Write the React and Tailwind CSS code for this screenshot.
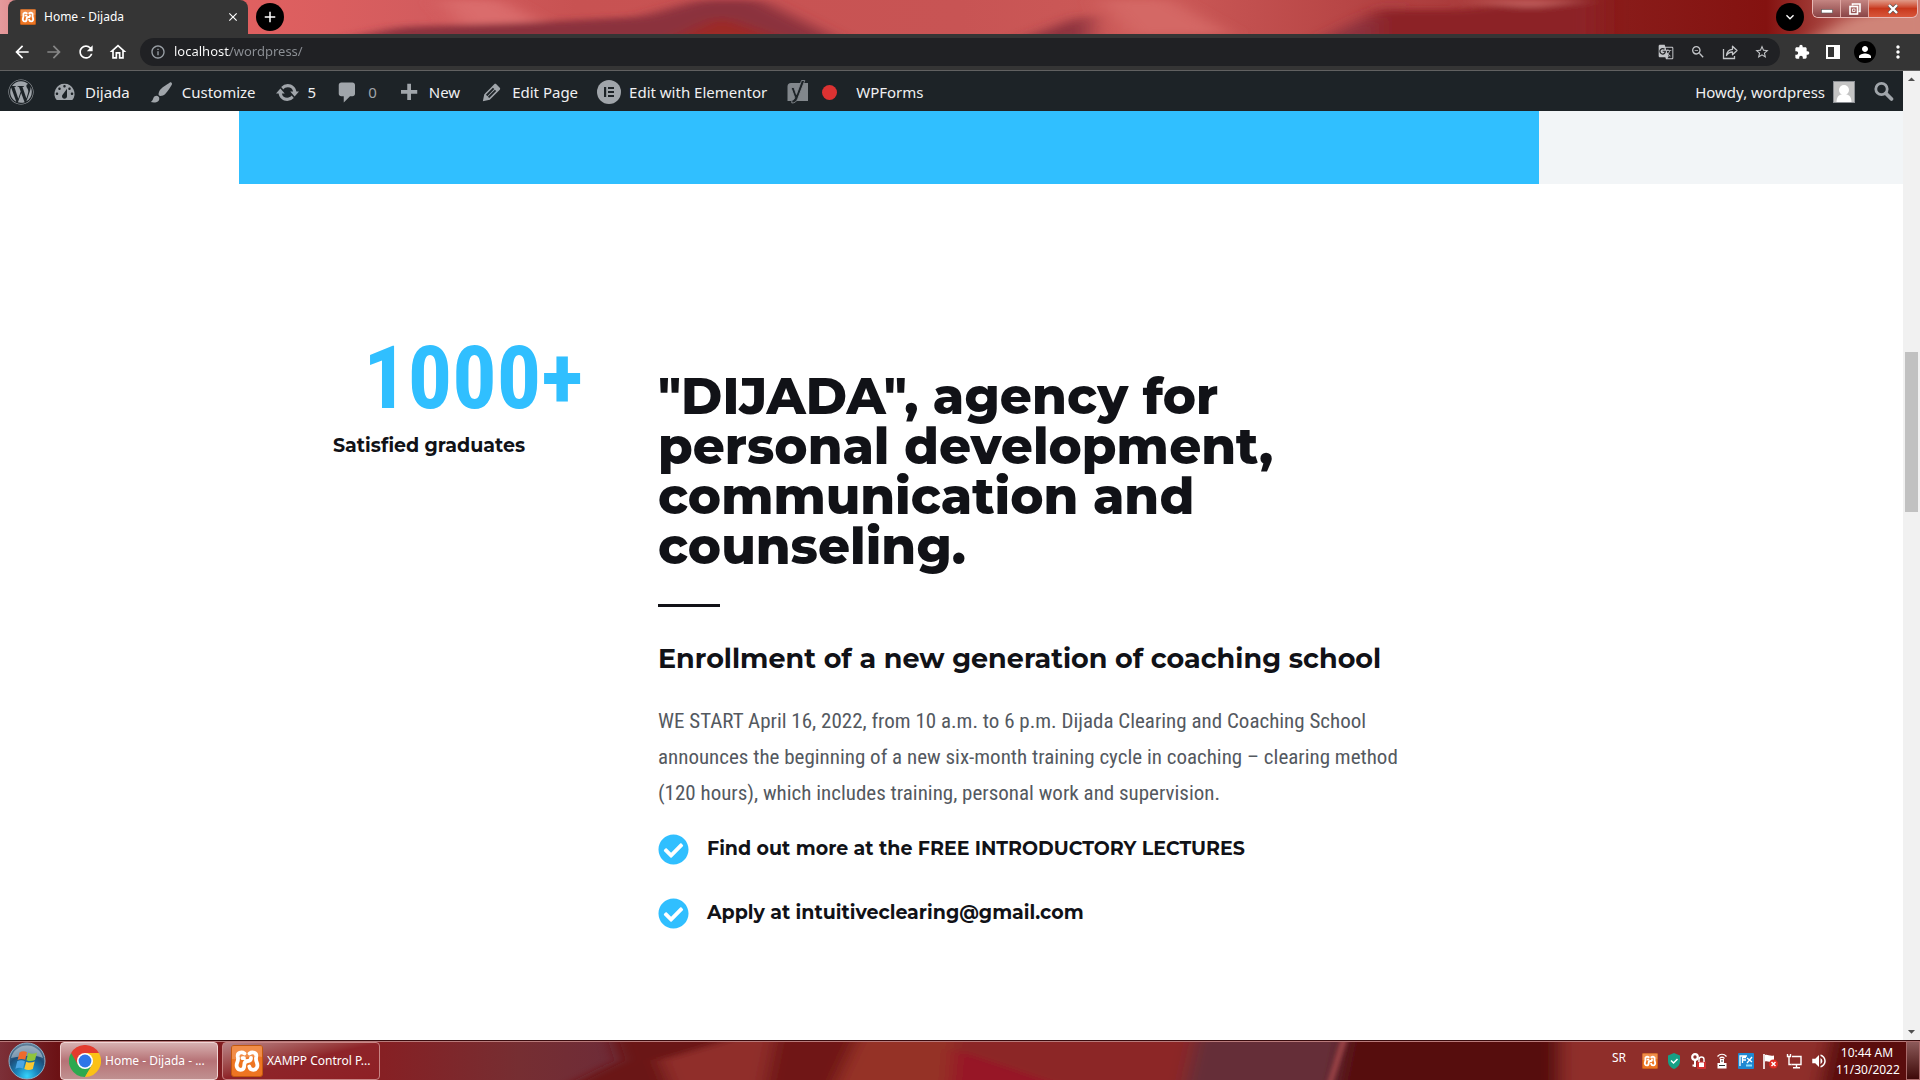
import React from "react";
import {
  MdAdd, MdArrowBack, MdArrowForward, MdClose, MdExtension, MdGTranslate, MdInfoOutline,
  MdKeyboardArrowDown, MdMoreVert, MdOutlineHome, MdPerson, MdRefresh, MdStarBorder, MdZoomOut,
  MdVolumeUp, MdArrowDropUp, MdArrowDropDown,
} from "react-icons/md";
import { FaWordpress, FaCheckCircle } from "react-icons/fa";

const dash = {
  dashboard: "M3.76 16h12.48A7.998 7.998 0 0 0 10 3a7.998 7.998 0 0 0-6.24 13zM10 4c.55 0 1 .45 1 1s-.45 1-1 1-1-.45-1-1 .45-1 1-1zM6 6c.55 0 1 .45 1 1s-.45 1-1 1-1-.45-1-1 .45-1 1-1zm8 0c.55 0 1 .45 1 1s-.45 1-1 1-1-.45-1-1 .45-1 1-1zm-5.37 5.55L12 7v6c0 1.1-.9 2-2 2s-2-.9-2-2c0-.57.24-1.08.63-1.45zM4 10c.55 0 1 .45 1 1s-.45 1-1 1-1-.45-1-1 .45-1 1-1zm12 0c.55 0 1 .45 1 1s-.45 1-1 1-1-.45-1-1 .45-1 1-1z",
  brush: "M18.33 3.57s.27-.8-.31-1.36c-.53-.52-1.22-.24-1.22-.24-.61.3-5.76 3.47-7.67 5.57-.86.96-2.06 3.79-1.09 4.82.92.98 3.96-.17 4.79-1 2.06-2.06 5.21-7.17 5.5-7.79zM1.4 17.65c2.37-1.56 1.46-3.41 3.23-4.64.93-.65 2.22-.62 3.08.29.63.67.8 2.57-.16 3.46-1.57 1.45-4 1.55-6.15.89z",
  update: "M10.2 3.28c3.53 0 6.43 2.61 6.92 6h2.08l-3.5 4-3.5-4h2.32a4.439 4.439 0 0 0-4.32-3.45c-1.45 0-2.73.71-3.54 1.78L4.95 5.66a6.965 6.965 0 0 1 5.25-2.38zm-.4 13.44c-3.52 0-6.43-2.61-6.92-6H.8l3.5-4c1.17 1.33 2.33 2.67 3.5 4H5.48a4.439 4.439 0 0 0 4.32 3.45c1.45 0 2.73-.71 3.54-1.78l1.71 1.95a6.95 6.95 0 0 1-5.25 2.38z",
  comment: "M5 2h9c1.1 0 2 .9 2 2v7c0 1.1-.9 2-2 2h-2l-5 5v-5H5c-1.1 0-2-.9-2-2V4c0-1.1.9-2 2-2z",
  plus: "M17 8v3h-5v5H9v-5H4V8h5V3h3v5h5z",
  edit: "M13.89 3.39l2.71 2.72c.46.46.42 1.24.03 1.64l-8.01 8.02-5.56 1.16 1.16-5.58s7.6-7.63 7.99-8.03c.39-.39 1.22-.39 1.68.07zm-2.73 2.79l-5.59 5.61 1.11 1.11 5.54-5.65zm-2.97 8.23l5.58-5.6-1.07-1.08-5.59 5.6z",
};

function Dashicon({ name }) {
  return (
    <svg viewBox="0 0 20 20" className="h-[25px] w-[25px] shrink-0 fill-[#a0a5aa]" aria-hidden="true">
      <path d={dash[name]} fillRule="evenodd" />
    </svg>
  );
}

function ElementorIcon() {
  return (
    <svg viewBox="0 0 24 24" className="h-6 w-6 shrink-0" aria-hidden="true">
      <circle cx="12" cy="12" r="12" fill="#a0a5aa" />
      <path d="M7 7h2.200v10H7zM11 7h6v2h-6zM11 11h6v2h-6zM11 15h6v2h-6z" fill="#1d2327" />
    </svg>
  );
}

function YoastIcon() {
  return (
    <svg viewBox="0 0 24 26" className="h-[26px] w-6" aria-hidden="true">
      <path d="M5 4H22V22H1.500V7.500A3.500 3.500 0 0 1 5 4z" fill="#82878c" />
      <path d="M15.500 1.500H18.800L11.800 19.500C10.600 22.700 8.800 24 5.800 24V21.300C7.700 21 8.600 20 8.700 18.500L5 8.500H8L10.400 15.500z" fill="#1d2327" stroke="#82878c" strokeWidth="0.900" />
    </svg>
  );
}

function XamppLogo({ className }) {
  return (
    <svg viewBox="0 0 32 32" className={className} aria-hidden="true">
      <rect x="0.5" y="0.5" width="31" height="31" rx="2.5" fill="#ee7522" stroke="#c2590f" />
      <path d="M1 1h30v11C20 10 10 15 1 14z" fill="#fff" opacity="0.18" />
      <path
        d="M13.500 8.500C10.500 6.300 6 7.800 6.800 11.800C7.300 14 7.300 15 6.200 17.500C4.600 21.500 6.500 24.800 9.800 24.800C13 24.800 13.300 22.300 13.300 19.800C13.300 17 14.500 16 17 16C19 16 20 14.800 20 12.800M18.500 8.500C21.500 6.300 26 7.800 25.200 11.800C24.700 14 24.700 15 25.800 17.500C27.400 21.500 25.500 24.800 22.200 24.800C20 24.800 18.700 23.600 18.300 21.500M11.500 13.200H13"
        fill="none" stroke="#fff" strokeWidth="3.8" strokeLinecap="round" strokeLinejoin="round"
      />
    </svg>
  );
}

function ChromeLogo() {
  return (
    <svg viewBox="0 0 48 48" className="h-8 w-8 shrink-0" aria-hidden="true">
      <path d="M24 24V48A24 24 0 0 1 3.2 12z" fill="#2da94f" />
      <path d="M3.2 12A24 24 0 0 1 44.8 12H24L13.6 18V30z" fill="#e33b2e" />
      <path d="M34.4 30 24 48 13.6 30z" fill="#2da94f" />
      <path d="M34.4 30 24 48A24 24 0 0 0 44.8 12H24z" fill="#fbc116" />
      <circle cx="24" cy="24" r="12" fill="#fff" />
      <circle cx="24" cy="24" r="9.6" fill="#2f76e8" />
    </svg>
  );
}

function StartOrb() {
  return (
    <svg viewBox="0 0 38 38" className="h-[38px] w-[38px]" aria-hidden="true">
      <defs>
        <radialGradient id="orb" cx="50%" cy="92%" r="85%">
          <stop offset="0" stopColor="#35d4fb" />
          <stop offset="0.35" stopColor="#1b86bd" />
          <stop offset="0.7" stopColor="#1d4d78" />
          <stop offset="1" stopColor="#5b7c98" />
        </radialGradient>
      </defs>
      <circle cx="19" cy="19" r="18" fill="url(#orb)" stroke="#8cb2c9" strokeWidth="1" />
      <path d="M3 16A16.5 16.5 0 0 1 35 16C27 12 12 14 3 16z" fill="#fff" opacity="0.4" />
      <path d="M11.5 10.5C14 8.700 17 9 19 10.300L17.200 17.800C14.500 16.500 12 16.600 9.600 18z" fill="#ee6a2c" />
      <path d="M20.200 10.800C23 12.200 26 12 29 10.500L27 18C24.500 19.400 21.500 19.500 18.500 18.200z" fill="#90c43c" />
      <path d="M9.200 19.300C11.800 18 14.300 18 16.900 19.200L15 26.500C12.500 25.300 9.800 25.400 7.400 26.800z" fill="#4aa5e4" />
      <path d="M18.200 19.700C21 21 24 20.800 26.700 19.500L24.800 27C22 28.400 19 28.300 16.300 27z" fill="#fbc831" />
    </svg>
  );
}

function TitleWallpaper() {
  return (
    <svg viewBox="0 0 1920 34" preserveAspectRatio="none" className="absolute inset-0 h-full w-full" aria-hidden="true">
      <defs>
        <linearGradient id="top">
          <stop offset="0" stopColor="#e59a9c" />
          <stop offset="0.01" stopColor="#e08a8c" />
          <stop offset="0.13" stopColor="#e06060" />
          <stop offset="0.22" stopColor="#d35c5e" />
          <stop offset="0.3" stopColor="#c85252" />
          <stop offset="0.5" stopColor="#c85454" />
          <stop offset="0.6" stopColor="#cc5a58" />
          <stop offset="0.7" stopColor="#b84646" />
          <stop offset="0.8" stopColor="#a03434" />
          <stop offset="0.83" stopColor="#8a1d1b" />
          <stop offset="0.92" stopColor="#841210" />
          <stop offset="0.96" stopColor="#b0504a" />
          <stop offset="1" stopColor="#cc7a72" />
        </linearGradient>
        <filter id="soft" x="-20%" y="-50%" width="140%" height="200%"><feGaussianBlur stdDeviation="12 3" /></filter>
      </defs>
      <rect width="1920" height="34" fill="url(#top)" />
      <g filter="url(#soft)">
        <path d="M440 0H500L560 34H470z" fill="#da6c6c" />
        <path d="M340 40 400 27 520 23 640 17 700 0H760L840 40z" fill="#8b303c" />
        <path d="M670 40 720 16 785 40z" fill="#9c2b26" />
        <path d="M1020 40 1090 13V40z" fill="#8b303c" />
        <path d="M1100 0H1170L1230 34H1130z" fill="#d46765" />
        <path d="M1320 40 1400 0 1375 20 1375 40z" fill="#8b303c" />
        <path d="M1375 10 1460 10 1520 4 1600-5V40H1375z" fill="#8c2226" />
        <path d="M1460 0H1590L1530 8z" fill="#c4605e" />
        <path d="M1810 40 1850 18 1940 10V40z" fill="#cf8478" />
      </g>
    </svg>
  );
}

function TaskWallpaper() {
  return (
    <svg viewBox="0 0 1920 40" preserveAspectRatio="none" className="absolute inset-0 h-full w-full" aria-hidden="true">
      <defs>
        <linearGradient id="bar">
          <stop offset="0" stopColor="#7c3038" />
          <stop offset="0.03" stopColor="#6c1215" />
          <stop offset="0.1" stopColor="#801c20" />
          <stop offset="0.2" stopColor="#862024" />
          <stop offset="0.27" stopColor="#762e32" />
          <stop offset="0.32" stopColor="#6e2c38" />
        </linearGradient>
        <filter id="softbar" x="-5%" y="-50%" width="110%" height="200%"><feGaussianBlur stdDeviation="9 2" /></filter>
        <filter id="edge" x="-100%" width="300%"><feGaussianBlur stdDeviation="2 0" /></filter>
      </defs>
      <rect width="1920" height="40" fill="url(#bar)" />
      <g filter="url(#softbar)">
        <path d="M612-5H780V45H570L620 20z" fill="#6b1212" />
        <path d="M660 20 700 8 740-5H780V45H670z" fill="#902e2c" />
        <path d="M775-5H860L840 45H765z" fill="#6f1815" />
        <path d="M858-5H955V45H835z" fill="#953028" />
        <path d="M955-5H1196L1185 45H950z" fill="#8c2826" />
        <path d="M953 8 1060 45H950z" fill="#971225" />
        <path d="M1196-5H1345L1335 45H1185z" fill="#652f39" />
        <path d="M1345-5H1560V45H1335z" fill="#570808" />
        <path d="M1560-5H1830V45H1560z" fill="#8f2e29" />
        <path d="M1830-5H1940V45H1820z" fill="#5a0809" />
      </g>
      <path d="M1340 0H1347L1334 40H1328z" fill="#a64a4c" opacity="0.8" filter="url(#edge)" />
    </svg>
  );
}

function AdminItem({ icon, children, dim }) {
  return (
    <a href="#" className={dim ? "flex items-center gap-2 text-[#a0a5aa]" : "flex items-center gap-2 text-[#f0f0f1]"}>
      {icon}
      <span>{children}</span>
    </a>
  );
}

const UI = "font-['Segoe_UI','Noto_Sans',sans-serif]";
const HEAD = "font-['Montserrat','Inter',sans-serif]";
const BODY = "font-['Roboto_Condensed','Roboto',sans-serif]";

export default function App() {
  return (
    <div className={`flex h-screen flex-col overflow-hidden bg-white ${UI}`}>
      <header className="shrink-0">
        <div className="relative flex h-[34px] items-end overflow-hidden bg-[#c85454]">
          <TitleWallpaper />
          <div className="relative ml-2 flex h-full w-60 items-center rounded-t-lg bg-[#353535] pl-3 pr-2 text-white">
            <XamppLogo className="h-4 w-4" />
            <span className="ml-2 flex-1 text-xs">Home - Dijada</span>
            <button aria-label="Close tab"><MdClose className="h-3.5 w-3.5" /></button>
          </div>
          <button aria-label="New tab" className="relative mb-[3px] ml-2 grid h-7 w-7 place-items-center rounded-full bg-black text-white"><MdAdd className="h-[18px] w-[18px]" /></button>
          <div className="flex-1" />
          <button aria-label="Search tabs" className="relative mb-[3px] mr-2 grid h-7 w-7 place-items-center rounded-full bg-black text-white"><MdKeyboardArrowDown className="h-4 w-4" /></button>
          <div className="relative mr-0.5 flex h-[18px] self-start overflow-hidden rounded-b-md border border-t-0 border-[#e9b9b6] text-white">
            <button aria-label="Minimize" className="grid w-7 place-items-center border-r border-[#e0a8a4] bg-linear-to-b from-[#c48582] to-[#8a4446]">
              <svg viewBox="0 0 12 12" className="h-3 w-3"><rect x="0.5" y="6.500" width="11" height="3.500" fill="#fff" stroke="#555" strokeWidth="0.6" /></svg>
            </button>
            <button aria-label="Restore" className="grid w-7 place-items-center border-r border-[#e0a8a4] bg-linear-to-b from-[#c48582] to-[#8a4446]">
              <svg viewBox="0 0 12 12" className="h-3 w-3" fill="none" stroke="#fff" strokeWidth="1.6"><path d="M3.500 2.500V1H11V8.500H9.500" /><rect x="1" y="3.500" width="7.500" height="7.500" /><path d="M3.500 6H6v2.500H3.500z" strokeWidth="0.8" /></svg>
            </button>
            <button aria-label="Close" className="grid w-12 place-items-center bg-linear-to-b from-[#e09a88] via-[#c8381c] to-[#d8563a]">
              <svg viewBox="0 0 12 12" className="h-3 w-3"><path d="M2 2l8 8M10 2l-8 8" stroke="#555" strokeWidth="3.6" /><path d="M2 2l8 8M10 2l-8 8" stroke="#fff" strokeWidth="2.400" /></svg>
            </button>
          </div>
        </div>

        <div className="flex h-[37px] items-center border-b border-[#616161] bg-[#353535] pl-3 text-white">
          <button aria-label="Back" className="w-8"><MdArrowBack className="h-5 w-5" /></button>
          <button aria-label="Forward" className="w-8 text-[#878787]"><MdArrowForward className="h-5 w-5" /></button>
          <button aria-label="Reload" className="w-8"><MdRefresh className="h-5 w-5" /></button>
          <button aria-label="Home" className="w-8"><MdOutlineHome className="h-5 w-5" /></button>
          <div className="flex h-7 flex-1 items-center rounded-full bg-[#202124] px-2.5 text-[#9aa0a6]">
            <MdInfoOutline className="h-4 w-4" />
            <input
              aria-label="Address"
              defaultValue="localhost/wordpress/"
              className="ml-2 flex-1 bg-[linear-gradient(90deg,#fff_56px,#8d9196_56px)] bg-clip-text text-[13px] text-transparent outline-none"
            />
            <div className="flex items-center gap-4 text-[#c3c5c8]">
              <button aria-label="Translate"><MdGTranslate className="h-4 w-4" /></button>
              <button aria-label="Zoom"><MdZoomOut className="h-4 w-4" /></button>
              <button aria-label="Share">
                <svg viewBox="0 0 16 16" className="h-4 w-4" fill="none" stroke="currentColor" strokeWidth="1.300"><path d="M1.500 5v9.500h11V12" /><path d="M4.500 11.500C5 7.500 7 5.500 10.500 5.300V2.200L15 6.500l-4.500 4.200V8C8 8 6 9 4.500 11.500z" strokeLinejoin="round" /></svg>
              </button>
              <button aria-label="Bookmark"><MdStarBorder className="h-4 w-4" /></button>
            </div>
          </div>
          <button aria-label="Extensions" className="ml-3.5"><MdExtension className="h-4 w-4" /></button>
          <button aria-label="Side panel" className="ml-4">
            <svg viewBox="0 0 14 14" className="h-3.5 w-3.5"><path d="M0 0h14v14H0zM2 2v10h6V2z" fill="#fff" fillRule="evenodd" /></svg>
          </button>
          <button aria-label="Profile" className="ml-3.5 grid h-[22px] w-[22px] place-items-center rounded-full bg-black"><MdPerson className="h-[18px] w-[18px]" /></button>
          <button aria-label="Menu" className="mx-3"><MdMoreVert className="h-5 w-5" /></button>
        </div>
      </header>

      <div className="flex min-h-0 flex-1">
        <div className="flex min-w-0 flex-1 flex-col">
          <nav className="flex h-10 shrink-0 items-center justify-between bg-[#1d2327] px-2 pt-0.5 text-[15px] text-[#f0f0f1]">
            <div className="flex items-center">
              <a href="#" aria-label="About WordPress" className="mr-[18px]"><FaWordpress className="h-[26px] w-[26px] text-[#a0a5aa]" /></a>
              <div className="flex items-center gap-[19px]">
                <AdminItem icon={<Dashicon name="dashboard" />}>Dijada</AdminItem>
                <AdminItem icon={<Dashicon name="brush" />}>Customize</AdminItem>
                <AdminItem icon={<Dashicon name="update" />}>5</AdminItem>
                <AdminItem icon={<Dashicon name="comment" />} dim>0</AdminItem>
                <AdminItem icon={<Dashicon name="plus" />}>New</AdminItem>
                <AdminItem icon={<Dashicon name="edit" />}>Edit Page</AdminItem>
                <AdminItem icon={<ElementorIcon />}>Edit with Elementor</AdminItem>
                <a href="#" aria-label="Yoast SEO" className="flex items-center gap-3"><YoastIcon /><span className="h-[15px] w-[15px] rounded-full bg-[#dc3232]" /></a>
                <a href="#">WPForms</a>
              </div>
            </div>
            <div className="flex items-center">
              <a href="#" className="flex items-center gap-2">
                Howdy, wordpress
                <svg viewBox="0 0 22 22" className="h-[22px] w-[22px]" aria-hidden="true"><rect x="0.500" y="0.500" width="21" height="21" fill="#c4c4c4" stroke="#8c8f94" /><circle cx="11" cy="9" r="5" fill="#fff" /><path d="M3.500 21C3.500 15 7 13 11 13s7.500 2 7.500 8z" fill="#fff" /></svg>
              </a>
              <button aria-label="Search" className="ml-[18px]">
                <svg viewBox="0 0 22 22" className="h-[22px] w-[22px]" fill="none" stroke="#a0a5aa" strokeLinecap="round"><circle cx="8.500" cy="8" r="5.700" strokeWidth="2.800" /><path d="M13 12.500l5.500 5.500" strokeWidth="3.800" /></svg>
              </button>
            </div>
          </nav>

          <main className="flex-1">
            <div className="grid h-[73px] grid-cols-[239fr_1300fr_364fr]">
              <div />
              <div className="bg-[#30bfff]" />
              <div className="bg-[#f2f5f7]" />
            </div>

            <section className="mx-auto flex max-w-[1425px] px-[94px] pt-[142px] text-[#111217]">
              <div className="w-[325px] shrink-0">
                <div className={`w-[250px] text-right text-[88px] font-bold leading-[104px] text-[#30bfff] ${BODY}`}>1000+</div>
                <p className={`mt-1 text-[19px] font-bold leading-6 ${HEAD}`}>Satisfied graduates</p>
              </div>
              <div className="mt-[46px] min-w-0 flex-1">
                <h1 className={`text-[50px] font-extrabold leading-[50px] ${HEAD}`}>
                  "DIJADA", agency for<br />personal development,<br />communication and<br />counseling.
                </h1>
                <hr className="mt-8 w-[62px] border-t-[3px] border-[#111217]" />
                <h2 className={`mt-8 text-[27px] font-bold leading-10 ${HEAD}`}>Enrollment of a new generation of coaching school</h2>
                <p className={`mt-6 text-[21px] leading-9 text-[#54595f] ${BODY}`}>
                  WE START April 16, 2022, from 10 a.m. to 6 p.m. Dijada Clearing and Coaching School<br />
                  announces the beginning of a new six-month training cycle in coaching – clearing method<br />
                  (120 hours), which includes training, personal work and supervision.
                </p>
                <ul className={`mt-5 flex flex-col gap-7 text-[19px] font-bold ${HEAD}`}>
                  {["Find out more at the FREE INTRODUCTORY LECTURES", "Apply at intuitiveclearing@gmail.com"].map((t) => (
                    <li key={t} className="flex h-9 items-center gap-[18px]">
                      <FaCheckCircle className="h-[31px] w-[31px] text-[#30bfff]" />
                      {t}
                    </li>
                  ))}
                </ul>
              </div>
            </section>
          </main>
        </div>

        <div className="flex w-[17px] shrink-0 flex-col items-center bg-[#f1f1f1] text-[#505050]" aria-hidden="true">
          <MdArrowDropUp className="h-[17px] w-[17px]" />
          <div className="grow-[264]" />
          <div className="w-[13px] grow-[160] bg-[#c1c1c1]" />
          <div className="grow-[511]" />
          <MdArrowDropDown className="h-[17px] w-[17px]" />
        </div>
      </div>

      <footer className="relative flex h-10 shrink-0 items-center overflow-hidden border-t border-[#3a0c0e] bg-[#6b1212] text-white">
        <TaskWallpaper />
        <div className="absolute inset-x-0 top-0 h-px bg-[#b87a7a]" />
        <button aria-label="Start" className="relative ml-2"><StartOrb /></button>
        <button className="relative ml-3.5 flex h-[38px] w-[158px] items-center gap-1 rounded-sm border border-[#f0d4d4] bg-linear-to-b from-[#d6b0b0] via-[#b67276] to-[#c09090] pl-2 text-xs">
          <ChromeLogo />Home - Dijada - ...
        </button>
        <button className="relative ml-1 flex h-[38px] w-[158px] items-center gap-1 rounded-sm border border-[#c88484] bg-linear-to-br from-[#b88488] via-[#8e2429] to-[#8e2025] pl-2 text-xs">
          <XamppLogo className="h-8 w-8 shrink-0" />XAMPP Control P...
        </button>
        <div className="relative ml-auto flex h-full items-center gap-2">
          <span className="mb-1.5 mr-2 text-xs">SR</span>
          <XamppLogo className="h-4 w-4" />
          <svg viewBox="0 0 16 16" className="h-4 w-4" aria-hidden="true"><path d="M8 0l6 2.500V8c0 4-2.500 6.500-6 8-3.500-1.500-6-4-6-8V2.500z" fill="#16a085" /><path d="M5 7.500l2.500 2.500L11.500 6" fill="none" stroke="#fff" strokeWidth="1.500" /></svg>
          <svg viewBox="0 0 16 16" className="h-4 w-4" aria-hidden="true"><circle cx="5" cy="4" r="2.800" fill="none" stroke="#fff" strokeWidth="2.200" /><path d="M5 7v7M5 12.500H2.500" stroke="#fff" strokeWidth="2" /><rect x="7" y="8.500" width="9" height="7.500" rx="1" fill="#d32f2f" /><path d="M9 9V6.500a2.500 2.500 0 0 1 5 0V9" stroke="#fff" fill="none" strokeWidth="1.400" /><rect x="9" y="9.500" width="5" height="4.500" fill="#fff" /></svg>
          <svg viewBox="0 0 16 16" className="h-4 w-4" fill="none" stroke="#fff" aria-hidden="true"><path d="M3.500 3.500C6 .5 10 .5 12.500 3.500M5.500 5.500C7 4 9 4 10.500 5.500" strokeWidth="1.200" /><path d="M6 6h4v4h2.500v5.500h-9V10H6z" fill="#fff" stroke="none" /><path d="M5 12.500h6M8 7v2" stroke="#333" /></svg>
          <svg viewBox="0 0 16 16" className="h-4 w-4" aria-hidden="true"><rect width="16" height="16" rx="1" fill="#1e88d2" /><path d="M2 13V3h7M4.500 4v6M4.500 4.500H8M4.500 7H8M9 5l5 4M14 4L9 10" stroke="#fff" strokeWidth="1.300" fill="none" /><path d="M8 12.500h6" stroke="#8be0ff" strokeWidth="2" /></svg>
          <svg viewBox="0 0 16 16" className="h-4 w-4" aria-hidden="true"><path d="M2 1v15" stroke="#fff" strokeWidth="1.600" /><path d="M3 2c3-1 4 1.500 9 .5V9C8 10 6 7.500 3 8.500z" fill="#fff" /><circle cx="11.500" cy="11" r="4.500" fill="#e02a22" /><path d="M9.500 9l4 4M13.500 9l-4 4" stroke="#fff" strokeWidth="1.500" /></svg>
          <svg viewBox="0 0 16 16" className="h-4 w-4" fill="none" stroke="#fff" strokeWidth="1.400" aria-hidden="true"><path d="M6 3.500h9v8H5.500M10.500 11.500v3M7 14.700h7" /><path d="M1.500 1v2.500h3V1M3 4v7.500h2.500" /></svg>
          <MdVolumeUp className="h-[18px] w-[18px]" />
          <time className="w-[62px] text-center text-xs leading-[17px]">10:44 AM 11/30/2022</time>
          <button aria-label="Show desktop" className="h-full w-3.5 border border-[#a86a6a] bg-linear-to-b from-[#8c5a5a] to-[#3e0809]" />
        </div>
      </footer>
    </div>
  );
}
